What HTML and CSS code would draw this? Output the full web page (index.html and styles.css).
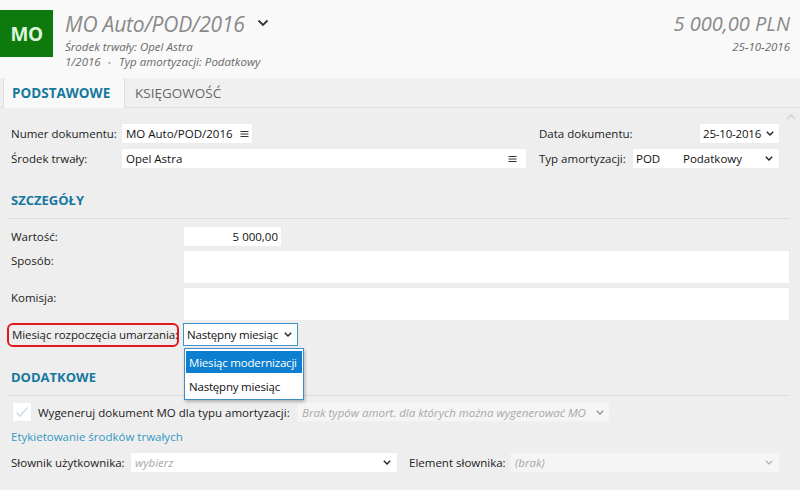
FILE: index.html
```html
<!DOCTYPE html>
<html lang="pl">
<head>
<meta charset="utf-8">
<link rel="stylesheet" href="styles.css">
</head>
<body>
<div class="header">
  <div class="tile">MO</div>
  <div class="titles">
    <div class="title-row">
      <span class="title">MO Auto/POD/2016</span>
      <svg class="title-chev" width="12" height="8" viewBox="0 0 12 8"><polyline points="1.5,1.5 6,6 10.5,1.5" fill="none" stroke="#333" stroke-width="1.8"/></svg>
    </div>
    <div class="sub">Środek trwały: Opel Astra</div>
    <div class="sub">1/2016 <span class="dot">•</span> Typ amortyzacji: Podatkowy</div>
  </div>
  <div class="amounts">
    <div class="amount">5 000,00 PLN</div>
    <div class="date">25-10-2016</div>
  </div>
</div>
<div class="tabs">
  <div class="tab active">PODSTAWOWE</div>
  <div class="tab">KSIĘGOWOŚĆ</div>
</div>
<div class="content">
  <svg class="scroll-up" width="10" height="6" viewBox="0 0 10 6"><polyline points="1,5 5,1 9,5" fill="none" stroke="#d4d4d4" stroke-width="1.5"/></svg>
  <div class="top">
    <div class="col-left">
      <div class="row">
        <span class="label w110">Numer dokumentu:</span>
        <span class="field f-num">MO Auto/POD/2016 <svg class="menu" width="9" height="8" viewBox="0 0 9 8"><path d="M0.5 1.5H8.5M0.5 4H8.5M0.5 6.5H8.5" stroke="#333" stroke-width="1"/></svg></span>
      </div>
      <div class="row">
        <span class="label w110">Środek trwały:</span>
        <span class="field f-st">Opel Astra <svg class="menu" width="9" height="8" viewBox="0 0 9 8"><path d="M0.5 1.5H8.5M0.5 4H8.5M0.5 6.5H8.5" stroke="#333" stroke-width="1"/></svg></span>
      </div>
    </div>
    <div class="col-right">
      <div class="row r-date">
        <span class="label">Data dokumentu:</span>
        <span class="field f-date">25-10-2016 <svg class="chev" width="8" height="5" viewBox="0 0 8 5"><polyline points="0.8,0.8 4,4 7.2,0.8" fill="none" stroke="#222" stroke-width="1.4"/></svg></span>
      </div>
      <div class="row">
        <span class="label">Typ amortyzacji:</span>
        <span class="field f-typ"><span class="code">POD</span><span class="typ-name">Podatkowy</span><svg class="chev" width="8" height="5" viewBox="0 0 8 5"><polyline points="0.8,0.8 4,4 7.2,0.8" fill="none" stroke="#222" stroke-width="1.4"/></svg></span>
      </div>
    </div>
  </div>

  <div class="section-title s1">SZCZEGÓŁY</div>
  <div class="rule"></div>

  <div class="details">
    <div class="row">
      <span class="label w172">Wartość:</span>
      <span class="field f-val">5 000,00</span>
    </div>
    <div class="row tall">
      <span class="label w172">Sposób:</span>
      <span class="field area"></span>
    </div>
    <div class="row tall">
      <span class="label w172">Komisja:</span>
      <span class="field area"></span>
    </div>
    <div class="row r-mies">
      <span class="label mies-label">Miesiąc rozpoczęcia umarzania:</span>
      <span class="select-wrap">
        <span class="field f-mies">Następny miesiąc <svg class="chev" width="8" height="5" viewBox="0 0 8 5"><polyline points="0.8,0.8 4,4 7.2,0.8" fill="none" stroke="#222" stroke-width="1.4"/></svg></span>
        <span class="dropdown">
          <span class="opt sel">Miesiąc modernizacji</span>
          <span class="opt">Następny miesiąc</span>
        </span>
      </span>
    </div>
  </div>

  <div class="section-title s2">DODATKOWE</div>
  <div class="rule"></div>

  <div class="extra">
    <div class="row">
      <span class="checkbox"><svg width="14" height="12" viewBox="0 0 14 12"><polyline points="1.5,6.5 5,10 12.5,1.5" fill="none" stroke="#cfdbe6" stroke-width="1.6"/></svg></span>
      <span class="label gen-label">Wygeneruj dokument MO dla typu amortyzacji:</span>
      <span class="field disabled f-gen"><span class="ph">Brak typów amort. dla których można wygenerować MO</span><svg class="chev" width="8" height="5" viewBox="0 0 8 5"><polyline points="0.8,0.8 4,4 7.2,0.8" fill="none" stroke="#999" stroke-width="1.4"/></svg></span>
    </div>
    <div class="link">Etykietowanie środków trwałych</div>
    <div class="row">
      <span class="label slo-label">Słownik użytkownika:</span>
      <span class="field f-slo"><span class="ph">wybierz</span><svg class="chev" width="8" height="5" viewBox="0 0 8 5"><polyline points="0.8,0.8 4,4 7.2,0.8" fill="none" stroke="#222" stroke-width="1.4"/></svg></span>
      <span class="label el-label">Element słownika:</span>
      <span class="field disabled f-el"><span class="ph">(brak)</span><svg class="chev" width="8" height="5" viewBox="0 0 8 5"><polyline points="0.8,0.8 4,4 7.2,0.8" fill="none" stroke="#aaa" stroke-width="1.2"/></svg></span>
    </div>
  </div>
</div>
</body>
</html>
```
FILE: styles.css
```css
* { box-sizing: border-box; }
html, body { margin: 0; padding: 0; }
body {
  width: 800px;
  height: 490px;
  overflow: hidden;
  background: #eeeeee;
  font-family: "Open Sans", "Noto Sans", sans-serif;
  font-size: 11.5px;
  color: #222;
}
.header {
  height: 78px;
  background: #f9f9f9;
  display: flex;
  align-items: flex-start;
  padding-top: 10px;
}
.tile {
  width: 53px;
  height: 47px;
  background: #0e7a0d;
  color: #dcf5dc;
  font-weight: 700;
  font-size: 19px;
  display: flex;
  align-items: center;
  justify-content: center;
  letter-spacing: -0.5px;
}
.titles {
  margin-left: 12px;
  flex: 1;
  font-style: italic;
}
.title-row { display: flex; align-items: center; height: 28px; margin-top: 0; }
.title { font-size: 21px; color: #8a8a8a; letter-spacing: -0.2px; }
.title-chev { margin-left: 12px; margin-top: -2px; }
.sub { font-size: 11.5px; color: #6a6a6a; line-height: 15px; }
.sub:nth-child(2) { margin-top: 1px; }
.sub .dot { color: #aaa; font-style: normal; font-size: 9px; margin: 0 5px 0 4px; }
.amounts { text-align: right; padding-right: 10px; font-style: italic; }
.amount { font-size: 20px; color: #8a8a8a; line-height: 28px; margin-top: 0; }
.date { font-size: 11.5px; color: #6a6a6a; line-height: 16px; margin-top: 1px; }

.tabs {
  height: 30px;
  background: #f0f0f0;
  display: flex;
  align-items: stretch;
  padding-left: 3px;
  border-bottom: 1px solid #e2e2e2;
}
.tab {
  display: flex;
  align-items: center;
  padding: 0 10px;
  font-size: 13.5px;
  color: #666;
}
.tab.active {
  width: 122px;
  padding-left: 8px;
  background: #f8f8f8;
  border-left: 1px solid #e0e0e0;
  border-right: 1px solid #e0e0e0;
  color: #17789f;
  font-weight: 700;
  margin-bottom: -1px;
}
.content { position: relative; padding: 0 10px 0 11px; }
.scroll-up { position: absolute; right: 4px; top: 6px; }

.row { display: flex; align-items: center; }
.label { white-space: nowrap; color: #222; }
.w110 { width: 110px; flex: none; }
.w172 { width: 172px; flex: none; }
.field {
  background: #fff;
  border: 1px solid #ececec;
  display: flex;
  align-items: center;
  padding: 0 4px;
  white-space: nowrap;
  color: #111;
}
.chev, .menu { flex: none; }

.top { display: flex; padding-top: 15px; }
.col-left { width: 516px; display: flex; flex-direction: column; gap: 4px; }
.col-right { margin-left: 12px; width: 241px; display: flex; flex-direction: column; gap: 4px; }
.col-left .row, .col-right .row { height: 21px; }
.f-num { width: 132px; height: 21px; }
.f-num .menu { margin-left: 7px; }
.f-st { width: 406px; height: 21px; justify-content: space-between; }
.f-st .menu { margin-right: 5px; }
.r-date { justify-content: space-between; }
.col-right .label { width: 93px; flex: none; }
.f-date { height: 21px; width: 81px; justify-content: space-between; padding: 0 5px 0 3px; letter-spacing: -0.2px; }
.f-typ { height: 21px; width: 148px; padding: 0 6px 0 3px; }
.f-typ .code { width: 47px; }
.f-typ .typ-name { flex: 1; }

.section-title {
  color: #17789f;
  font-weight: 700;
  font-size: 13px;
  line-height: 18px;
}
.s1 { margin-top: 22px; }
.s2 { margin-top: 22px; }
.rule {
  height: 1px;
  background: #dcdcdc;
  margin: 9px 0 0 -3px;
}

.details { display: flex; flex-direction: column; gap: 3px; padding-top: 7px; }
.details .row { height: 21px; }
.details .row.tall { height: 34px; align-items: flex-start; }
.details .row.tall .label { padding-top: 3px; }
.f-val { width: 99px; height: 21px; justify-content: flex-end; padding-right: 3px; }
.area { flex: 1; height: 34px; }
.details .r-mies { height: 23px; margin-top: -1px; }
.mies-label {
  width: 172px;
  flex: none;
  margin-left: -4px;
  padding-left: 3px;
  height: 24px;
  display: flex;
  align-items: center;
  border: 2px solid #e0191e;
  border-radius: 6px;
  margin-right: 4px;
  letter-spacing: -0.1px;
}
.select-wrap { position: relative; }
.f-mies {
  width: 115px;
  height: 23px;
  border: 1px solid #3b95cc;
  justify-content: space-between;
  padding: 0 5px 0 3px;
  letter-spacing: -0.2px;
}
.dropdown {
  position: absolute;
  left: 1px;
  top: 25px;
  width: 120px;
  background: #fff;
  border: 1px solid #3f8fc4;
  box-shadow: 1px 2px 3px rgba(0,0,0,0.25);
  display: flex;
  flex-direction: column;
  padding: 2px 1px;
  z-index: 5;
}
.opt {
  height: 22px;
  display: flex;
  align-items: center;
  padding-left: 3px;
  color: #111;
  white-space: nowrap;
  letter-spacing: -0.2px;
}
.opt + .opt { margin-top: 2px; }
.opt.sel { background: #0c7fd0; color: #fff; }

.extra { padding-top: 6px; }
.extra .row { height: 20px; }
.checkbox {
  width: 20px;
  height: 20px;
  background: #fff;
  border: 1px solid #ececec;
  display: flex;
  align-items: center;
  justify-content: center;
  margin-left: 1px;
  flex: none;
}
.gen-label { margin-left: 6px; width: 259px; flex: none; }
.disabled { background: #f5f5f5; border-color: #f0f0f0; }
.ph { font-style: italic; color: #a8a8a8; flex: 1; overflow: hidden; }
.f-gen { width: 313px; height: 20px; padding: 0 5px 0 4px; }
.link { color: #3498c4; margin-top: 4px; line-height: 22px; }
.extra .row:last-child { height: 21px; margin-top: 4px; }
.slo-label { width: 119px; flex: none; }
.f-slo { width: 268px; height: 21px; padding: 0 6px 0 4px; }
.el-label { margin-left: 11px; width: 101px; flex: none; }
.f-el { width: 270px; height: 21px; padding: 0 6px 0 4px; }
```
